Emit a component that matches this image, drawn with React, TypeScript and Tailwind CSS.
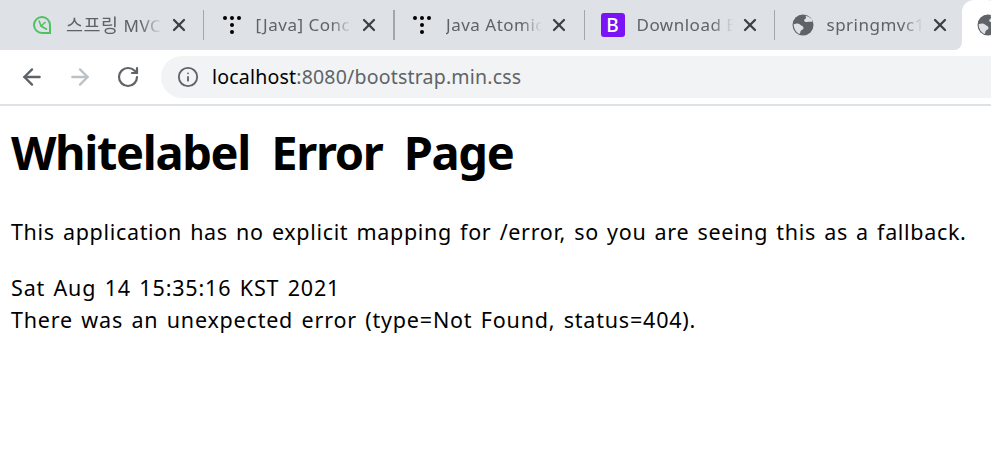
import type { ReactNode } from "react";
import { ArrowLeft, ArrowRight, RotateCw, Info, X } from "lucide-react";

function LeafIcon() {
  return (
    <svg width="20" height="20" viewBox="0 0 20 20" fill="none" stroke="#4fc160" strokeWidth="2">
      <path d="M18 18H10a8 8 0 1 1 8-8z" />
      <path d="M7 5.500l2 5.500M13.500 7L9 11l6 3.500" strokeWidth="1.600" />
    </svg>
  );
}

function DotsIcon() {
  return (
    <svg width="20" height="20" viewBox="0 0 20 20" fill="#000">
      <circle cx="3" cy="3" r="2" />
      <circle cx="10" cy="3" r="2" />
      <circle cx="17" cy="3" r="2" />
      <circle cx="10" cy="10" r="2" />
      <circle cx="10" cy="17" r="2" />
    </svg>
  );
}

function BootstrapIcon() {
  return (
    <div className="flex h-6 w-6 items-center justify-center rounded-[3px] bg-[#7a14f5] text-[19px] font-medium leading-none text-white">
      B
    </div>
  );
}

function GlobeIcon() {
  return (
    <svg width="22" height="22" viewBox="0 0 22 22">
      <circle cx="11" cy="11" r="10.500" fill="#5f6368" />
      <path d="M1.500 10.500c2.500-1.500 5-1.500 6.500 0s3.500 1.500 3.500 3.500-2.500 1.500-3 3.500-.5 2-1 2.500C4 18.500 2 15 1.500 10.500z" fill="#dee1e6" />
      <path d="M13 1.700c1.500 1 1.500 2.300 0 3.300s-1 3 1.500 3 4.500-.5 6 0l-.5-2.500C18.500 3.500 16 2 13 1.700z" fill="#dee1e6" />
    </svg>
  );
}

function Tab({
  icon,
  title,
  width,
  divider = true,
}: {
  icon: ReactNode;
  title: ReactNode;
  width: string;
  divider?: boolean;
}) {
  return (
    <div className={`flex h-[50px] shrink-0 items-center ${width}`}>
      <div className={`h-[30px] w-[1.500px] shrink-0 ${divider ? "bg-[#a3a6ab]" : ""}`} />
      <div className="ml-[12.500px] flex w-[30px] shrink-0 items-center justify-center">{icon}</div>
      <div className="ml-[9px] w-[96px] shrink-0 overflow-hidden whitespace-nowrap text-[17px] tracking-[0.5px] text-[#5f6368] [mask-image:linear-gradient(to_right,black_78%,transparent_100%)]">
        {title}
      </div>
      <X size={20} strokeWidth={2.700} className="ml-[7px] shrink-0 text-[#3c4043]" />
    </div>
  );
}

export default function App() {
  return (
    <div className="h-[461px] w-[991px] overflow-hidden bg-white font-['Noto_Sans','Noto_Sans_CJK_KR',sans-serif] text-black">
      {/* 탭 바 */}
      <div className="flex h-[50px] items-start bg-[#dee1e6] pl-[13px]">
        <Tab
          width="w-[189.500px]"
          icon={<LeafIcon />}
          title={<><span className="text-[18.500px]">스프링</span> MVC</>}
          divider={false}
        />
        <Tab width="w-[190.500px]" icon={<DotsIcon />} title="[Java] Concurrency" />
        <Tab width="w-[190.500px]" icon={<DotsIcon />} title="Java Atomic" />
        <Tab width="w-[190px]" icon={<BootstrapIcon />} title="Download Bootstrap" />
        <Tab width="w-[188.500px]" icon={<GlobeIcon />} title="springmvc1" />
        <div className="relative flex h-[50px] flex-1 items-center rounded-t-[12px] bg-white pl-[15px]">
          <div className="absolute bottom-0 left-[-8px] h-2 w-2 bg-white">
            <div className="h-2 w-2 rounded-br-[8px] bg-[#dee1e6]" />
          </div>
          <GlobeIcon />
        </div>
      </div>

      {/* 주소창 */}
      <div className="flex h-[56px] items-center border-b-2 border-[#dee1e6] pl-[19px]">
        <ArrowLeft size={26} strokeWidth={2.200} className="text-[#5f6368]" />
        <ArrowRight size={26} strokeWidth={2.200} className="ml-[22px] text-[#bdc1c6]" />
        <RotateCw size={24} strokeWidth={2.200} className="ml-[23px] text-[#5f6368]" />
        <div className="ml-[21px] flex h-[42px] flex-1 items-center rounded-l-[21px] bg-[#f1f3f4] pl-[16px]">
          <Info size={22} strokeWidth={2} className="text-[#5f6368]" />
          <span className="ml-[13px] text-[19.500px] leading-none tracking-[0.2px] text-black">
            localhost<span className="text-[#5f6368]">:8080/bootstrap.min.css</span>
          </span>
        </div>
      </div>

      {/* 본문 */}
      <div className="pl-[11px]">
        <h1 className="mt-[11px] whitespace-nowrap text-[47px] font-bold leading-[70px] tracking-[-1.350px] [word-spacing:10.500px]">
          Whitelabel Error Page
        </h1>
        <p className="mt-[29px] whitespace-nowrap text-[21.500px] leading-[32px] tracking-[0.665px] [word-spacing:2px]">
          This application has no explicit mapping for /error, so you are seeing this as a fallback.
        </p>
        <div className="mt-[24px] whitespace-nowrap text-[21.500px] leading-[32px] tracking-[0.830px] [word-spacing:2px]">
          Sat Aug 14 15:35:16 KST 2021
        </div>
        <div className="whitespace-nowrap text-[21.500px] leading-[32px] tracking-[0.800px] [word-spacing:2px]">
          There was an unexpected error (type=Not Found, status=404).
        </div>
      </div>
    </div>
  );
}
